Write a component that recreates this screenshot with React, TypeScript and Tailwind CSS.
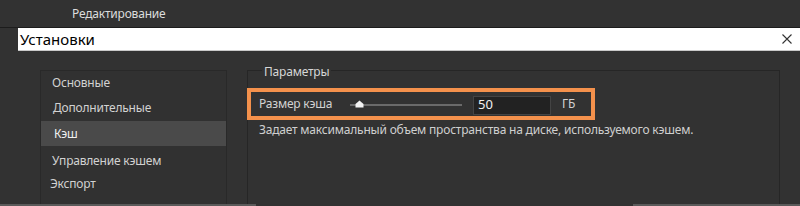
import React from "react";

const font = { fontFamily: '"Noto Sans", "Open Sans", sans-serif' };

export default function App() {
  return (
    <div
      className="w-[800px] h-[206px] bg-[#323232] overflow-hidden flex flex-col text-[#d6d6d6]"
      style={font}
    >
      {/* Top menu bar */}
      <div className="h-[28px] flex items-center pl-[72px] text-[12px] tracking-[-0.2px] text-[#dcdcdc] border-b border-[#1c1c1c]">
        Редактирование
      </div>
      {/* Dialog title bar */}
      <div className="ml-[18px] h-[23px] bg-white border-b border-[#c9c9c9] flex items-center justify-between pl-[2px] pr-[6px]">
        <span className="text-[15px] text-black leading-none">Установки</span>
        <svg width="12" height="12" viewBox="0 0 12 12" className="mr-[1px]">
          <path d="M1.5 1.5 L10.5 10.5 M10.5 1.5 L1.5 10.5" stroke="#333" strokeWidth="1.1" />
        </svg>
      </div>
      {/* Body */}
      <div className="flex-1 flex pt-[19px] min-h-0">
        {/* Left nav */}
        <div className="ml-[40px] w-[187px] border border-[#292929] border-b-0 bg-[#313131] flex flex-col text-[12px] tracking-[-0.2px] text-[#d2d2d2] pt-[1px]">
          <div className="h-[22px] flex items-center pl-[11px]">Основные</div>
          <div className="h-[27px] flex items-center pl-[12px]">Дополнительные</div>
          <div className="h-[25px] flex items-center pl-[13px] bg-[#4a4a4a] text-[#f0f0f0]">Кэш</div>
          <div className="h-[28px] flex items-center pl-[11px] pt-[2px]">Управление кэшем</div>
          <div className="h-[20px] flex items-center pl-[9px]">Экспорт</div>
        </div>
        {/* Right group */}
        <div className="ml-[20px] w-[533px] relative border border-[#262626] border-b-0 flex flex-col pt-[17px]">
          <div className="absolute -top-[8px] left-[14px] px-[2px] bg-[#323232] text-[12px] tracking-[-0.2px] text-[#d6d6d6]">
            Параметры
          </div>
          <div className="-ml-[1px] w-[348px] h-[32px] border-[4px] border-[#f4914c] flex items-center">
            <span className="pl-[8px] w-[99px] text-[12px] tracking-[-0.2px] text-[#d2d2d2]">Размер кэша</span>
            <div className="relative w-[112px] h-[10px] flex items-center mt-[2px]">
              <div className="w-full h-[2px] bg-[#6a6a6a]" />
              <svg width="9" height="8" viewBox="0 0 9 8" className="absolute left-[5px] top-[0px]">
                <path d="M4.5 0.5 L8.5 4 L8.5 7.5 L0.5 7.5 L0.5 4 Z" fill="#f2f2f2" />
              </svg>
            </div>
            <div className="ml-[11px] w-[78px] h-[19px] bg-[#222222] border border-[#444] flex items-center pl-[4px] text-[13px] text-[#f0f0f0] mt-[2px]">
              50
            </div>
            <span className="ml-[11px] text-[12px] text-[#d2d2d2]">ГБ</span>
          </div>
          <div className="pl-[11px] pt-[1px] text-[12px] tracking-[-0.2px] text-[#cfcfcf]">
            Задает максимальный объем пространства на диске, используемого кэшем.
          </div>
        </div>
      </div>
      {/* Bottom edge */}
      <div className="h-[2px] flex">
        <div className="w-[256px] bg-[#5a5a5a]" />
        <div className="w-[377px]" />
        <div className="flex-1 bg-[#5a5a5a]" />
      </div>
    </div>
  );
}
